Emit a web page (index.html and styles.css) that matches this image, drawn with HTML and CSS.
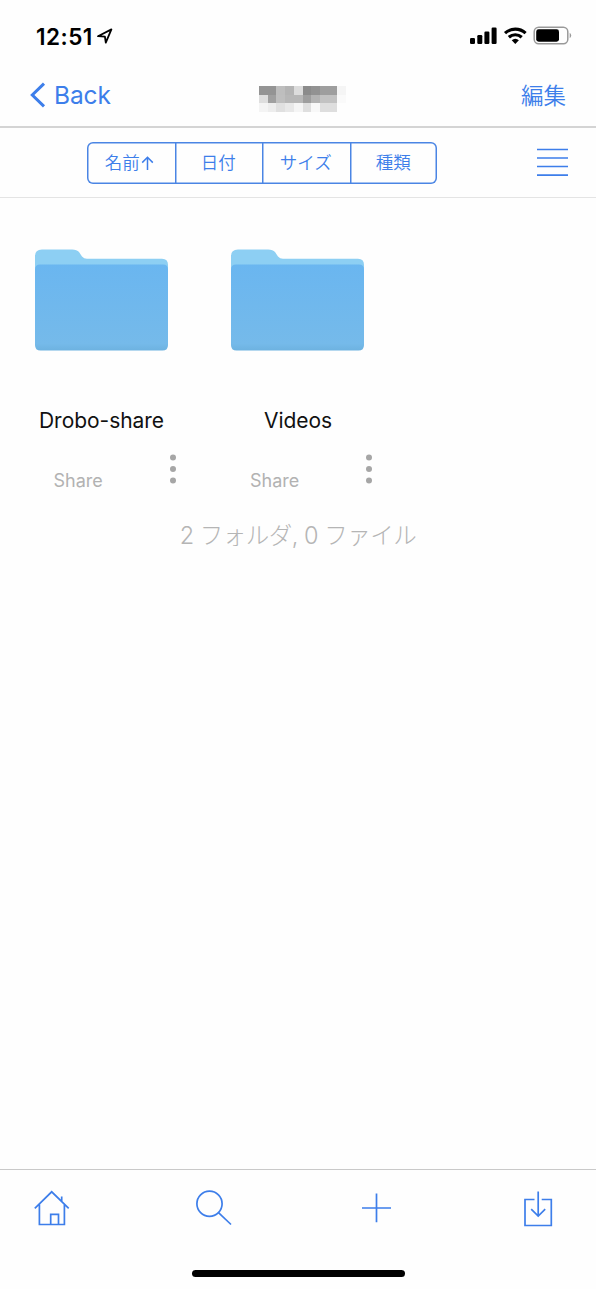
FILE: index.html
```html
<!DOCTYPE html>
<html lang="ja">
<head>
<meta charset="utf-8">
<title>Files</title>
<link rel="stylesheet" href="styles.css">
</head>
<body>
<div class="screen">
  <header class="status">
    <span class="clock">12:51</span>
    <svg class="locate" width="16" height="16" viewBox="0 0 16 16"><path d="M1 8.2 14.4 1.4 8.8 14.6 7.9 8.6Z"/></svg>
    <svg class="signals" width="103" height="20" viewBox="0 0 103 20">
      <rect x="0" y="12" width="5" height="6" rx="1.2"/><rect x="7.3" y="9" width="5" height="9" rx="1.2"/><rect x="14.4" y="5.5" width="5" height="12.5" rx="1.2"/><rect x="21.6" y="1.5" width="5" height="16.5" rx="1.2"/>
      <path class="wave" d="M35 7.1a15.5 15.5 0 0 1 20.6 0M38.9 11.2a9.6 9.6 0 0 1 12.8 0"/>
      <path d="M41.7 14.2a5.6 5.6 0 0 1 7.2 0L45.3 18Z"/>
      <rect class="case" x="64.2" y="1.2" width="33.6" height="16.6" rx="4.5"/>
      <rect x="66.2" y="3.3" width="22.8" height="12.4" rx="2.4"/>
      <path class="tip" d="M99.7 6.8a3.2 3.2 0 0 1 0 5.4Z"/>
    </svg>
  </header>
  <nav class="nav">
    <a class="back"><svg width="16" height="26" viewBox="0 0 16 26"><path d="M14 1.7 2.3 13 14 24.3"/></svg><span>Back</span></a>
    <svg class="mosaic" width="87" height="26" viewBox="0 0 10 3" preserveAspectRatio="none" shape-rendering="crispEdges">
      <path fill="#949494" d="M0 0h2v1h-2z"/><path fill="#bebebe" d="M2 0h1v1h-1z"/><path fill="#b4b4b4" d="M3 0h1v1h-1z"/><path fill="#dcdcdc" d="M4 0h1v1h-1z"/><path fill="#8b8b8b" d="M5 0h1v1h-1z"/><path fill="#929292" d="M6 0h1v1h-1z"/><path fill="#9e9e9e" d="M7 0h2v1h-2z"/><path fill="#f5f5f5" d="M9 0h1v1h-1z"/><path fill="#fafafa" d="M9 1h1v1h-1z"/>
      <path fill="#dedede" d="M0 1h1v1h-1z"/><path fill="#a0a0a0" d="M1 1h1v1h-1z"/><path fill="#bfbfbf" d="M2 1h1v1h-1z"/><path fill="#b7b7b7" d="M3 1h2v1h-2z"/><path fill="#9e9e9e" d="M5 1h1v1h-1z"/><path fill="#b3b3b3" d="M6 1h1v1h-1z"/><path fill="#c2c2c2" d="M7 1h2v1h-2z"/>
      <path fill="#f4f4f4" d="M0 2h1v1h-1z"/><path fill="#ededed" d="M1 2h1v1h-1z"/><path fill="#e0e0e0" d="M2 2h1v1h-1z"/><path fill="#e8e8e8" d="M3 2h1v1h-1z"/><path fill="#f5f5f5" d="M4 2h1v1h-1z"/><path fill="#dfdfdf" d="M5 2h1v1h-1z"/><path fill="#f8f8f8" d="M6 2h1v1h-1z"/><path fill="#dedede" d="M7 2h2v1h-2z"/>
    </svg>
    <a class="edit">編集</a>
  </nav>
  <div class="sortbar">
    <div class="segments"><span>名前<svg class="up" width="13" height="15" viewBox="0 0 13 15"><path d="M6.5 14V1.5M1.2 6.6 6.5 1.3l5.3 5.3"/></svg></span><span>日付</span><span>サイズ</span><span>種類</span></div>
    <svg class="list" width="31" height="29" viewBox="0 0 31 29"><path d="M0 1.5h31M0 10h31M0 18.500h31M0 27.200h31"/></svg>
  </div>
  <main class="content">
    <svg width="0" height="0" class="defs"><defs><linearGradient id="front" x2="0" y2="1"><stop stop-color="#6ab6f0"/><stop offset=".92" stop-color="#75baea"/><stop offset="1" stop-color="#6db2e0"/></linearGradient>
      <symbol id="folder" viewBox="0 0 133 102"><path fill="#8dcff3" d="M0 7Q0 .5 7 .5H37Q42 .5 44 3L47 7.500Q49 9.700 52 9.700H127Q133 9.700 133 16V40H0Z"/><path fill="url(#front)" d="M0 20.500Q0 15.500 5 15.500H128Q133 15.500 133 20.500V96Q133 101.500 127.500 101.500H5.500Q0 101.500 0 96Z"/></symbol></defs></svg>
    <div class="grid">
      <article class="item"><svg class="folder" width="133" height="102"><use href="#folder"/></svg>
        <h2 class="name">Drobo-share</h2>
        <div class="meta"><span>Share</span><svg width="8" height="30" viewBox="0 0 8 30"><circle cx="4" cy="3.500" r="3"/><circle cx="4" cy="15" r="3"/><circle cx="4" cy="26.500" r="3"/></svg></div></article>
      <article class="item"><svg class="folder" width="133" height="102"><use href="#folder"/></svg>
        <h2 class="name">Videos</h2>
        <div class="meta"><span>Share</span><svg width="8" height="30" viewBox="0 0 8 30"><circle cx="4" cy="3.500" r="3"/><circle cx="4" cy="15" r="3"/><circle cx="4" cy="26.500" r="3"/></svg></div></article>
    </div>
    <p class="summary">2 フォルダ, 0 ファイル</p>
  </main>
  <footer class="tabs">
    <div class="tabrow">
      <svg width="36" height="38" viewBox="0 0 36 38"><path d="M.8 18.300 17.700 1.800 34.700 18.300M5.400 14.500V34.500H30.400V14.500M27.700 11V6.500M16.700 34.500V24.300H24.500V34.500"/></svg>
      <svg width="36" height="38" viewBox="0 0 36 38"><circle cx="13.500" cy="13.800" r="12.600"/><path d="M22.500 22.700 35 34.500"/></svg>
      <svg width="36" height="38" viewBox="0 0 36 38"><path d="M18.500 3.500V32.300M4 18H33"/></svg>
      <svg width="36" height="38" viewBox="0 0 36 38"><path d="M14.500 9.500H5V35.500H31.300V9.500H21.700M18.200 1.500V26M11.200 19.200 18.200 26 25.200 19.200"/></svg>
    </div>
    <div class="homebar"></div>
  </footer>
</div>
</body>
</html>
```
FILE: styles.css
```css
* { box-sizing: border-box; }
body { margin: 0; background: #fefefe; }
svg { display: block; flex: none; }
.screen {
  width: 596px; height: 1289px; display: flex; flex-direction: column;
  background: #fefefe; color: #111;
  font-family: Inter, "Noto Sans CJK JP", sans-serif;
}
.status { height: 72px; padding: 0 23px 0 36px; display: flex; align-items: center; }
.clock { font-size: 22.5px; font-weight: 600; letter-spacing: .5px; color: #000; }
.locate { margin-left: 4px; fill: none; stroke: #000; stroke-width: 1.8; stroke-linejoin: round; }
.signals { margin-left: auto; }
.signals .wave { fill: none; stroke: #000; stroke-width: 3.2; }
.signals .case { fill: none; stroke: #999; stroke-width: 1.5; }
.signals .tip { fill: #999; }
.nav {
  height: 56px; padding: 0 30px; border-bottom: 2px solid #d4d4d4; color: #3d7eea;
  display: grid; grid-template-columns: 1fr 87px 1fr; align-items: start;
}
.back { display: flex; align-items: center; gap: 8px; height: 46px; font-size: 24.5px; letter-spacing: -.1px; }
.back svg { fill: none; stroke: #3d7eea; stroke-width: 3; }
.mosaic { margin: 14px 0 0 4.5px; }
.edit { justify-self: end; height: 46px; line-height: 48px; font-size: 22.5px; font-weight: 350; }
.sortbar {
  height: 70px; border-bottom: 1px solid #e4e4e4; padding: 0 28px 0 87px;
  display: flex; align-items: center; justify-content: space-between;
}
.segments {
  width: 350px; height: 42px; box-shadow: inset 0 0 0 1.5px #4a85e4; border-radius: 6px;
  display: grid; grid-template-columns: repeat(4, minmax(0, 1fr)); color: #3d7eea;
  font-size: 17.5px; font-weight: 350;
}
.segments span { display: flex; align-items: center; justify-content: center; line-height: 1; padding-top: 1px; }
.segments span + span { box-shadow: inset 1.5px 0 0 #4a85e4; }
.segments span:first-child { padding-right: 3px; }
.up { margin-left: 1px; fill: none; stroke: #3d7eea; stroke-width: 1.5; }
.list { stroke: #3d7eea; stroke-width: 1.7; }
.content { flex: 1; }
.defs { height: 0; }
.grid { display: flex; gap: 20.5px; padding: 51px 0 0 13px; }
.item { width: 176px; display: flex; flex-direction: column; align-items: center; }
.name { margin: 56px 0 0 1px; height: 28px; line-height: 28px; font-size: 21px; letter-spacing: -.05px; font-weight: 400; white-space: nowrap; }
.meta { width: 100%; margin-top: 19px; padding: 0 12.5px 0 40.5px; display: flex; justify-content: space-between; color: #b2b2b2; font-size: 18px; }
.meta span { line-height: 24px; padding-top: 15px; height: 39px; }
.meta svg { fill: #a6a6a6; }
.summary { margin: 27px 0 0; text-align: center; font-size: 23.5px; letter-spacing: -.5px; line-height: 32px; font-weight: 300; color: #b5b5b5; }
.tabs { height: 120px; border-top: 1px solid #c9c9c9; display: flex; flex-direction: column; align-items: center; }
.tabrow { width: 100%; padding: 20px 40px 0 34px; display: flex; justify-content: space-between; }
.tabrow svg { fill: none; stroke: #3d7eea; stroke-width: 1.7; }
.homebar { width: 213px; height: 7px; margin-top: 42px; border-radius: 4px; background: #000; }
```
